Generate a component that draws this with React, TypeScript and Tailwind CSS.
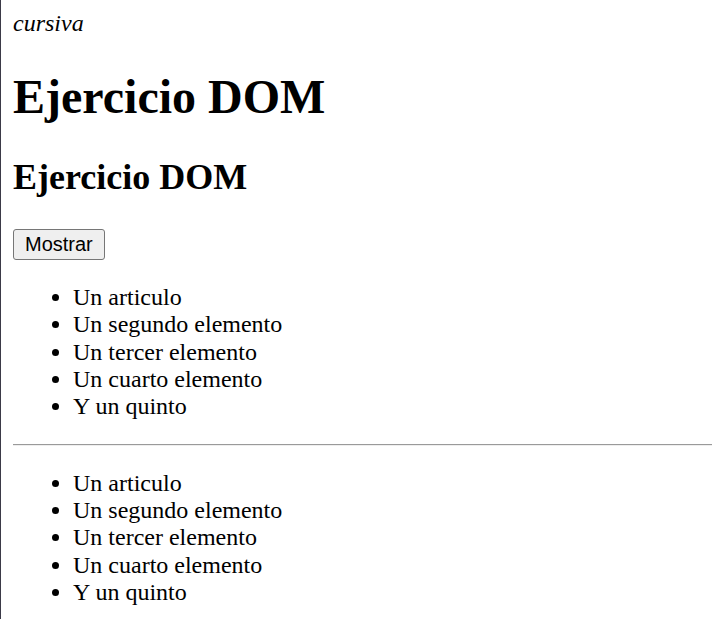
const items = [
  'Un articulo',
  'Un segundo elemento',
  'Un tercer elemento',
  'Un cuarto elemento',
  'Y un quinto',
];

const ItemList = () => (
  <ul className="list-disc pl-[60px] text-[24px] leading-[27.25px]">
    {items.map((item) => (
      <li key={item}>{item}</li>
    ))}
  </ul>
);

const App = () => {
  return (
    <div className="min-h-screen bg-white border-l border-[#3b3a48] pl-[12px] pt-[10px] text-black font-['Liberation_Serif','Times_New_Roman',serif]">
      <div className="text-[24px] leading-[27px]">
        <i>cursiva</i>
      </div>
      <h1 className="mt-[32px] text-[48px] leading-[55px] font-bold">Ejercicio DOM</h1>
      <h2 className="mt-[33px] text-[36px] leading-[41px] font-bold">Ejercicio DOM</h2>
      <div className="mt-[31px] flex">
        <button
          type="button"
          className="h-[31px] px-[11px] bg-[#efefef] border border-[#767676] rounded-[3px] text-[20px] leading-[23px] text-black font-['Liberation_Sans',Arial,sans-serif]"
        >
          Mostrar
        </button>
      </div>
      <div className="mt-[24px]">
        <ItemList />
      </div>
      <hr className="mt-[24px] h-0 border-t border-b border-t-[#9a9a9a] border-b-[#eeeeee]" />
      <div className="mt-[23.5px]">
        <ItemList />
      </div>
    </div>
  );
};

export default App;
